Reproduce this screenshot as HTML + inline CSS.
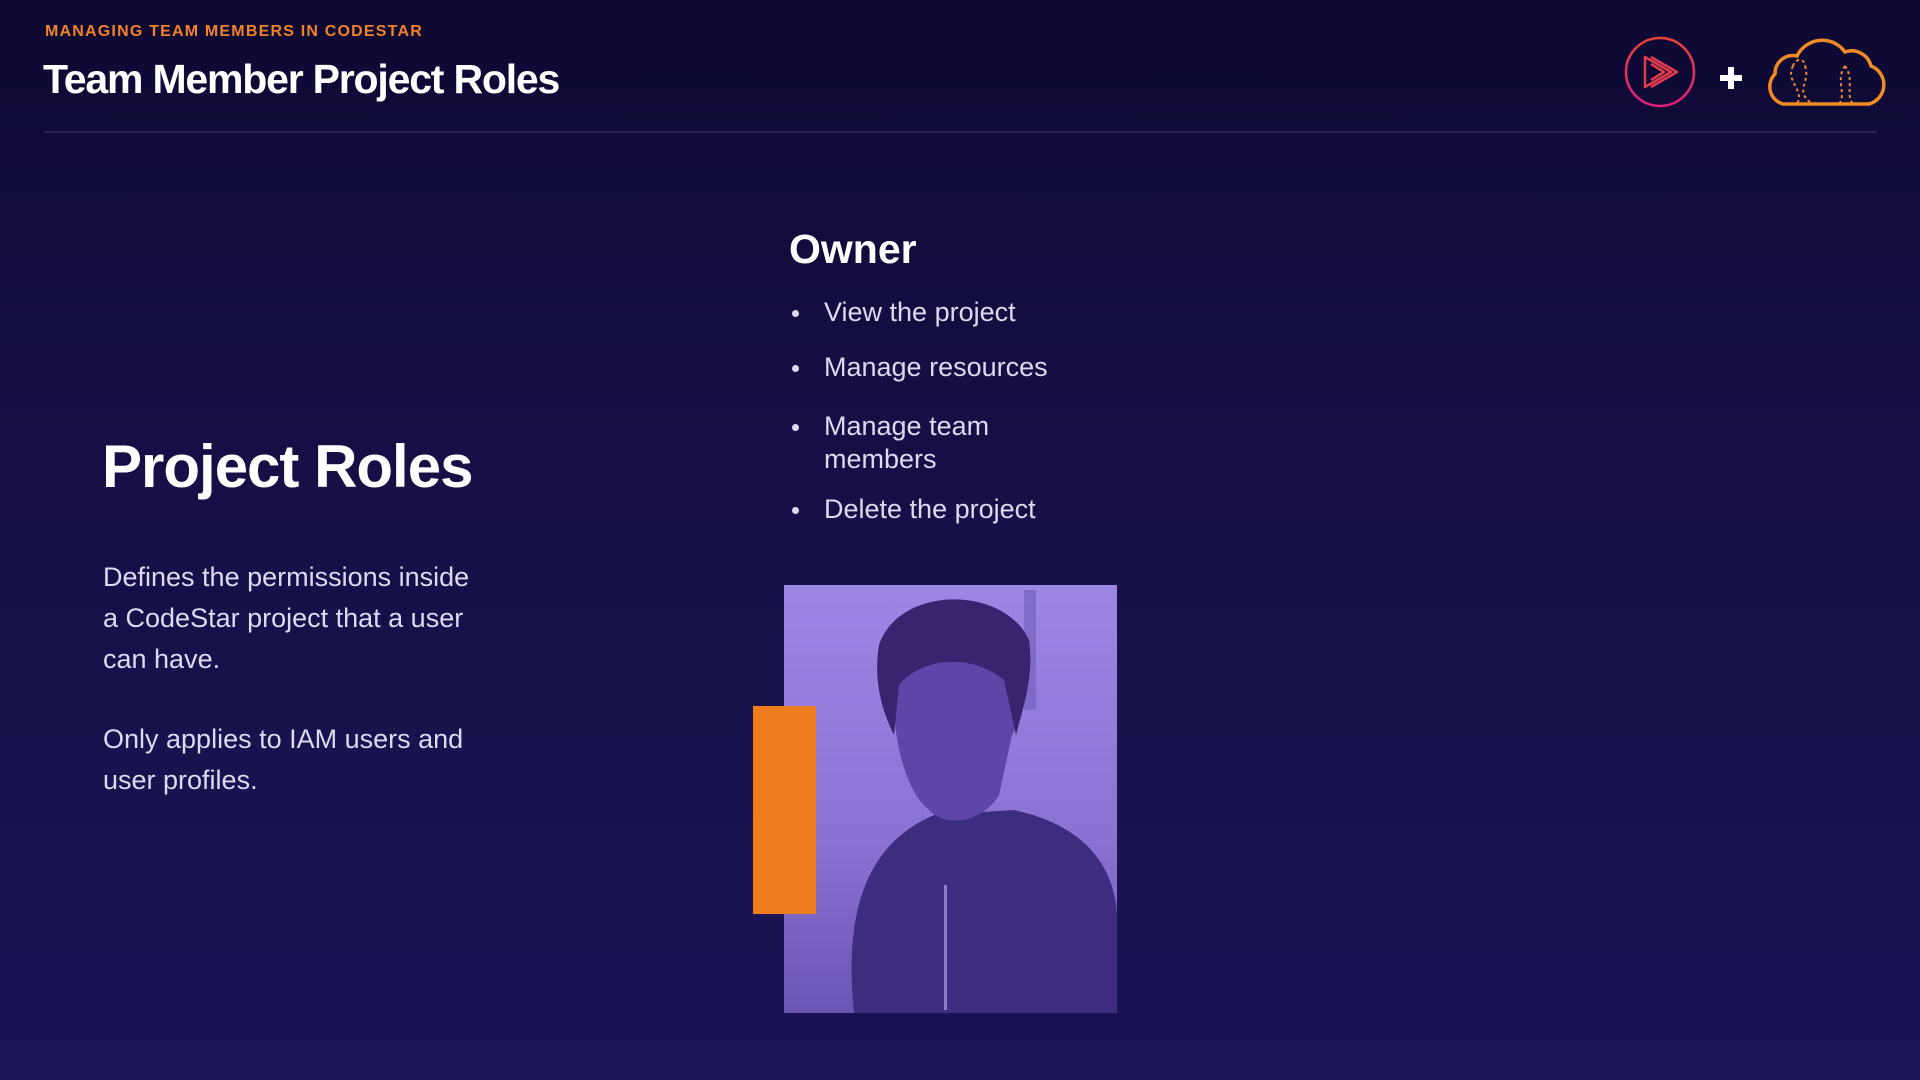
<!DOCTYPE html>
<html><head><meta charset="utf-8"><style>
*{margin:0;padding:0;box-sizing:border-box}
body{width:1920px;height:1080px;overflow:hidden;font-family:"Liberation Sans",sans-serif;background:linear-gradient(180deg,#0d0932 0%,#150f45 40%,#1b1557 100%);position:relative;color:#fff}
.abs{position:absolute}
.sub{left:45px;top:23px;font-size:16px;font-weight:bold;color:#f0822a;letter-spacing:1.2px}
.title{left:43px;top:56px;font-size:41px;font-weight:bold;letter-spacing:-1.2px;white-space:nowrap}
.rule{left:44px;top:131px;width:1833px;height:2px;background:#25204f}
.h1{left:102px;top:432px;font-size:60px;font-weight:bold;letter-spacing:-1px}
.p{left:103px;font-size:27px;line-height:41px;color:#dcdaf0}
.owner{left:789px;top:226px;font-size:41px;font-weight:bold}
.li{left:792px;font-size:27px;color:#dcdaf0;line-height:33px}
.li:before{content:"";position:absolute;left:0;top:14px;width:7px;height:7px;border-radius:50%;background:#dcdaf0}
.li span{display:block;margin-left:32px}
</style></head><body>
<div class="abs sub">MANAGING TEAM MEMBERS IN CODESTAR</div>
<div class="abs title">Team Member Project Roles</div>
<div class="abs rule"></div>
<svg class="abs" style="left:1620px;top:34px" width="80" height="80" viewBox="0 0 80 80">
<defs><linearGradient id="g" x1="0" y1="0" x2="0" y2="1"><stop offset="0" stop-color="#e8453a"/><stop offset="1" stop-color="#e0207a"/></linearGradient></defs>
<circle cx="40" cy="38" r="34" fill="none" stroke="url(#g)" stroke-width="2.5"/>
<path d="M25 23 V53 L51 38 Z M31 23 L57 38 L31 53 M31 30 L44 38 L31 46" fill="none" stroke="#e23b4c" stroke-width="2.5" stroke-linejoin="round"/>
</svg>
<div class="abs" style="left:1720px;top:75px;width:22px;height:6px;background:#fff"></div>
<div class="abs" style="left:1728px;top:67px;width:6px;height:22px;background:#fff"></div>
<svg class="abs" style="left:1763px;top:34px" width="125" height="75" viewBox="0 0 125 75">
<path d="M20 70 H106 A20 20 0 0 0 108 32 A20 20 0 0 0 82 18 A28 28 0 0 0 34 22 A18 18 0 0 0 12 40 A18 18 0 0 0 20 70 Z" fill="none" stroke="#f08a24" stroke-width="3.5"/>
<path d="M30 32 C22 48 42 55 34 70 M42 32 C48 48 30 58 50 70 M30 32 C32 24 42 24 42 32 M82 32 C72 46 84 60 76 70 M82 32 C92 46 82 60 90 70" fill="none" stroke="#f08a24" stroke-width="2" stroke-dasharray="3 3"/>
</svg>
<div class="abs h1">Project Roles</div>
<div class="abs p" style="top:557px">Defines the permissions inside<br>a CodeStar project that a user<br>can have.</div>
<div class="abs p" style="top:719px">Only applies to IAM users and<br>user profiles.</div>
<div class="abs owner">Owner</div>
<div class="abs li" style="top:296px"><span>View the project</span></div>
<div class="abs li" style="top:351px"><span>Manage resources</span></div>
<div class="abs li" style="top:410px"><span>Manage team<br>members</span></div>
<div class="abs li" style="top:493px"><span>Delete the project</span></div>
<svg class="abs" style="left:784px;top:585px" width="333" height="428" viewBox="0 0 333 428">
<defs><linearGradient id="bg" x1="0" y1="0" x2="0" y2="1"><stop offset="0" stop-color="#9d86e4"/><stop offset="0.6" stop-color="#8a72d2"/><stop offset="1" stop-color="#6a54b4"/></linearGradient></defs>
<rect width="333" height="428" fill="url(#bg)"/>
<rect x="240" y="5" width="12" height="120" fill="#7862c0" opacity="0.7"/>
<path d="M70 428 C60 330 80 260 150 230 L230 225 C300 240 330 280 333 330 V428 Z" fill="#3e2c80"/>
<path d="M100 70 C110 15 200 10 235 60 C250 90 240 130 228 150 L215 210 C200 235 165 245 145 225 C120 205 110 150 110 120 Z" fill="#5e45a8"/>
<path d="M95 60 C115 0 220 0 245 55 C250 90 240 120 232 150 L220 95 C190 70 140 70 115 100 L110 150 C95 120 90 90 95 60 Z" fill="#3a2470"/>
<rect x="160" y="300" width="3" height="125" fill="#8c80c8"/>
</svg>
<div class="abs" style="left:753px;top:706px;width:63px;height:208px;background:#ef7d1d"></div>
</body></html>
